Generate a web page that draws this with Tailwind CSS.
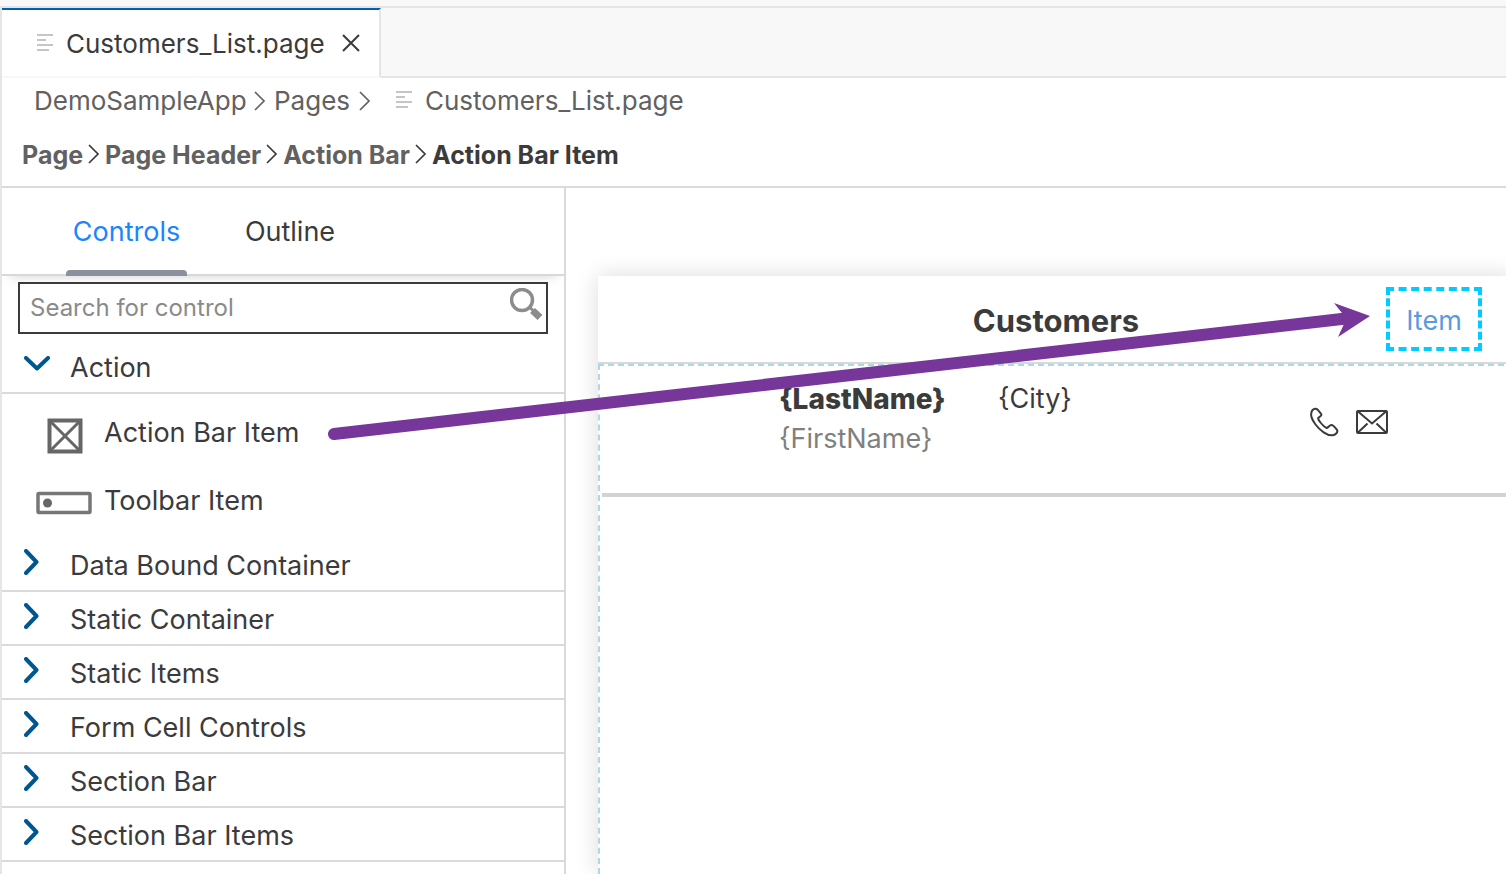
<!DOCTYPE html>
<html lang="en">
<head>
<meta charset="utf-8">
<meta name="viewport" content="width=device-width, initial-scale=1">
<title>Customers_List.page</title>
<script src="https://cdn.jsdelivr.net/npm/@tailwindcss/browser@4"></script>
</head>
<body class="relative flex h-screen flex-col overflow-hidden bg-white font-['Inter','Liberation_Sans',sans-serif] text-[#3b3b3b]">
<svg class="hidden">
  <symbol id="file" viewBox="0 0 18 20"><path d="M1 2h16M1 7h9M1 12h16M1 17h12" fill="none" stroke="currentColor" stroke-width="2"/></symbol>
  <symbol id="crumb" viewBox="0 0 12 20"><path d="M1 1l9 9-9 9" fill="none" stroke="currentColor" stroke-width="1.700"/></symbol>
  <symbol id="chev" viewBox="0 0 16 26"><path d="M2 2l10.500 11L2 24" fill="none" stroke="currentColor" stroke-width="4" stroke-linecap="round" stroke-linejoin="round"/></symbol>
</svg>

<div class="h-2 shrink-0 border-b-2 border-[#e5e5e5] bg-[#f8f8f8]"></div>
<div class="flex min-h-0 flex-1 flex-col border-l-2 border-[#e5e5e5]">
  <!-- Editor tabs -->
  <div class="flex h-[70px] shrink-0 bg-[#f8f8f8]">
    <div class="flex items-center border-t-2 border-r-2 border-b-2 border-t-[#005fb8] border-r-[#e5e5e5] border-b-[#f8f8f8] bg-white pr-[18px] pl-[34px]">
      <svg class="h-5 w-[18px] text-[#c5c5c5]"><use href="#file"/></svg>
      <span class="ml-3 w-[258px] pt-0.5 text-[26px] leading-8 whitespace-nowrap">Customers_List.page</span>
      <button type="button" aria-label="Close tab" class="ml-[17px]"><svg class="size-5" viewBox="0 0 20 20" fill="none" stroke="currentColor" stroke-width="2"><path d="M2 2l16 16M18 2L2 18"/></svg></button>
    </div>
    <div class="flex-1 border-b-2 border-[#e5e5e5]"></div>
  </div>
  <!-- File path -->
  <nav aria-label="File path" class="flex h-[46px] shrink-0 items-center pl-8 text-[26px] leading-8 whitespace-nowrap text-[#616161]">
    <a href="#" class="w-[210px]">DemoSampleApp</a>
    <svg class="ml-2.5 h-5 w-3"><use href="#crumb"/></svg>
    <a href="#" class="ml-2 w-[75px]">Pages</a>
    <svg class="ml-2.5 h-5 w-3"><use href="#crumb"/></svg>
    <svg class="mb-0.5 ml-6 h-5 w-[18px] text-[#c5c5c5]"><use href="#file"/></svg>
    <a href="#" class="ml-3">Customers_List.page</a>
  </nav>
  <!-- Control path -->
  <nav aria-label="Control path" class="flex h-16 shrink-0 items-center gap-[5px] border-b-2 border-[#dadade] pl-5 text-[25px] leading-8 font-bold whitespace-nowrap text-[#616161]">
    <a href="#">Page</a>
    <svg class="mb-0.5 h-5 w-3 text-[#3b3b3b]"><use href="#crumb"/></svg>
    <a href="#">Page Header</a>
    <svg class="mb-0.5 h-5 w-3 text-[#3b3b3b]"><use href="#crumb"/></svg>
    <a href="#">Action Bar</a>
    <svg class="mb-0.5 h-5 w-3 text-[#3b3b3b]"><use href="#crumb"/></svg>
    <a href="#" aria-current="page" class="text-[#3b3b3b]">Action Bar Item</a>
  </nav>

  <div class="flex min-h-0 flex-1">
    <!-- Controls palette -->
    <aside class="w-[564px] shrink-0 overflow-hidden border-r-2 border-[#dadade] text-[27px] leading-8">
      <div role="tablist" class="flex h-[88px] gap-[50px] border-b-2 border-[#d8d8d8] pl-16 shadow-[0_6px_12px_-8px_rgba(0,0,0,0.25)]">
        <button type="button" role="tab" aria-selected="true" class="relative w-[121px] pt-0.5 text-center text-[#1a85ff]">Controls<span class="absolute inset-x-0 -bottom-0.5 h-1.5 rounded-t bg-[#8a919c]"></span></button>
        <button type="button" role="tab" aria-selected="false" class="w-[106px] pt-0.5 text-center">Outline</button>
      </div>
      <label class="mx-4 mt-1.5 flex h-[52px] items-center border-2 border-[#3b3b3b] bg-white pr-1 pl-2.5">
        <input type="text" aria-label="Search for control" placeholder="Search for control" class="min-w-0 flex-1 text-[24px] leading-8 outline-none placeholder:text-[#8a8a8a]">
        <svg class="mb-2 size-8" viewBox="0 0 32 32" fill="none" stroke="#8c8c8c"><circle cx="12" cy="12" r="10.500" stroke-width="3.500"/><path d="M20 19.500l3 3" stroke-width="3"/><path d="M22.500 22.500l7.500 7" stroke-width="7"/></svg>
      </label>
      <button type="button" aria-expanded="true" class="flex h-[60px] w-full items-center border-b-2 border-[#dadade] pt-2 pl-[22px] text-left">
        <svg class="mb-1.5 h-4 w-[26px] text-[#00578f]" viewBox="0 0 26 16"><path d="M2 2l11 10.500L24 2" fill="none" stroke="currentColor" stroke-width="4" stroke-linecap="round" stroke-linejoin="round"/></svg>
        <span class="ml-5 pt-0.5">Action</span>
      </button>
      <ul class="pt-[5px]">
        <li class="flex h-[68px] items-center pl-[34px]">
          <svg class="mt-1.5 h-9 w-14" viewBox="0 0 56 36" fill="none" stroke="#666"><path d="M13.500 2.500h31v31h-31z" stroke-width="4"/><path d="M14 3l30 30M44 3L14 33" stroke-width="3"/></svg>
          <span class="ml-3">Action Bar Item</span>
        </li>
        <li class="flex h-[68px] items-center pl-[34px]">
          <svg class="mt-1 h-6 w-14" viewBox="0 0 56 24" fill="none" stroke="#777"><rect x="2" y="2.500" width="52" height="19" rx="1" stroke-width="3.500"/><circle cx="11.500" cy="12" r="4.500" fill="#666" stroke="none"/></svg>
          <span class="ml-3">Toolbar Item</span>
        </li>
      </ul>
      <div class="pt-[3px]">
        <button type="button" aria-expanded="false" class="flex h-[54px] w-full items-center border-b-2 border-[#dadade] pl-[22px] text-left"><svg class="mb-1 h-[26px] w-4 text-[#00578f]"><use href="#chev"/></svg><span class="ml-[30px] pt-1">Data Bound Container</span></button>
        <button type="button" aria-expanded="false" class="flex h-[54px] w-full items-center border-b-2 border-[#dadade] pl-[22px] text-left"><svg class="mb-1 h-[26px] w-4 text-[#00578f]"><use href="#chev"/></svg><span class="ml-[30px] pt-1">Static Container</span></button>
        <button type="button" aria-expanded="false" class="flex h-[54px] w-full items-center border-b-2 border-[#dadade] pl-[22px] text-left"><svg class="mb-1 h-[26px] w-4 text-[#00578f]"><use href="#chev"/></svg><span class="ml-[30px] pt-1">Static Items</span></button>
        <button type="button" aria-expanded="false" class="flex h-[54px] w-full items-center border-b-2 border-[#dadade] pl-[22px] text-left"><svg class="mb-1 h-[26px] w-4 text-[#00578f]"><use href="#chev"/></svg><span class="ml-[30px] pt-1">Form Cell Controls</span></button>
        <button type="button" aria-expanded="false" class="flex h-[54px] w-full items-center border-b-2 border-[#dadade] pl-[22px] text-left"><svg class="mb-1 h-[26px] w-4 text-[#00578f]"><use href="#chev"/></svg><span class="ml-[30px] pt-1">Section Bar</span></button>
        <button type="button" aria-expanded="false" class="flex h-[54px] w-full items-center border-b-2 border-[#dadade] pl-[22px] text-left"><svg class="mb-1 h-[26px] w-4 text-[#00578f]"><use href="#chev"/></svg><span class="ml-[30px] pt-1">Section Bar Items</span></button>
      </div>
    </aside>

    <!-- Page design canvas -->
    <main class="flex min-w-0 flex-1 overflow-hidden pt-[88px] pl-8">
      <section class="-mr-2 flex min-w-0 flex-1 flex-col bg-white shadow-[0_0_22px_rgba(0,0,0,0.14)]">
        <header class="grid h-[88px] shrink-0 grid-cols-[1fr_auto_1fr] items-center border-b-2 border-[#d8d8d8]">
          <h1 class="col-start-2 pt-1 text-[31px] leading-9 font-bold">Customers</h1>
          <button type="button" class="mr-8 h-16 w-24 justify-self-end border-4 border-dashed border-[#00ccff] pt-1 text-[27px] leading-8 text-[#5a9bdf]">Item</button>
        </header>
        <div class="flex-1 border-t-2 border-l-2 border-dashed border-[#add8e6] pl-0.5 text-[27px]">
          <div class="flex h-[131px] border-b-4 border-[#d3d3d3] pt-[13px] pl-[177px]">
            <div class="w-[219px] leading-10">
              <p class="text-[28px] font-extrabold">{LastName}</p>
              <p class="text-[#808080]">{FirstName}</p>
            </div>
            <p class="leading-10">{City}</p>
            <div class="mr-[126px] ml-auto flex items-center gap-4 pb-7">
              <button type="button" aria-label="Call"><svg class="size-8" viewBox="0 0 32 32" fill="none" stroke="currentColor" stroke-width="2" stroke-linejoin="round"><path d="M7 2.800C9 2 10 4 13.300 8.300C14 9.500 12 10.500 10.300 11.800C9.500 13 11 14.500 12.500 16.500C14.500 19 17 21.500 18.800 22C20.500 21.500 21.500 19 23.300 19C25 19 28 22.500 29 23.800C30.500 26.500 27 29 24.500 29.300C19 29.700 12 24.500 7.500 18.500C4.500 14.500 2.300 9.500 3.500 6C4 4.500 5.500 3 7 2.800Z"/></svg></button>
              <button type="button" aria-label="Send mail"><svg class="size-8" viewBox="0 0 32 32" fill="none" stroke="currentColor" stroke-width="2"><rect x="1" y="5" width="30" height="22" rx="1"/><path d="M2 5.500l14 12 14-12M2 26.500l9.500-9M30 26.500l-9.500-9"/></svg></button>
            </div>
          </div>
        </div>
      </section>
    </main>
  </div>
</div>

<!-- Annotation: drag the control onto the page header -->
<svg class="pointer-events-none absolute top-0 left-0 h-[874px] w-[1506px]" viewBox="0 0 1506 874" aria-hidden="true">
  <path d="M334 434L1346 318.500" stroke="#773699" stroke-width="12" stroke-linecap="round"/>
  <path d="M1334 303L1370 316L1338 337L1344 324L1342 313Z" fill="#773699"/>
</svg>
</body>
</html>
